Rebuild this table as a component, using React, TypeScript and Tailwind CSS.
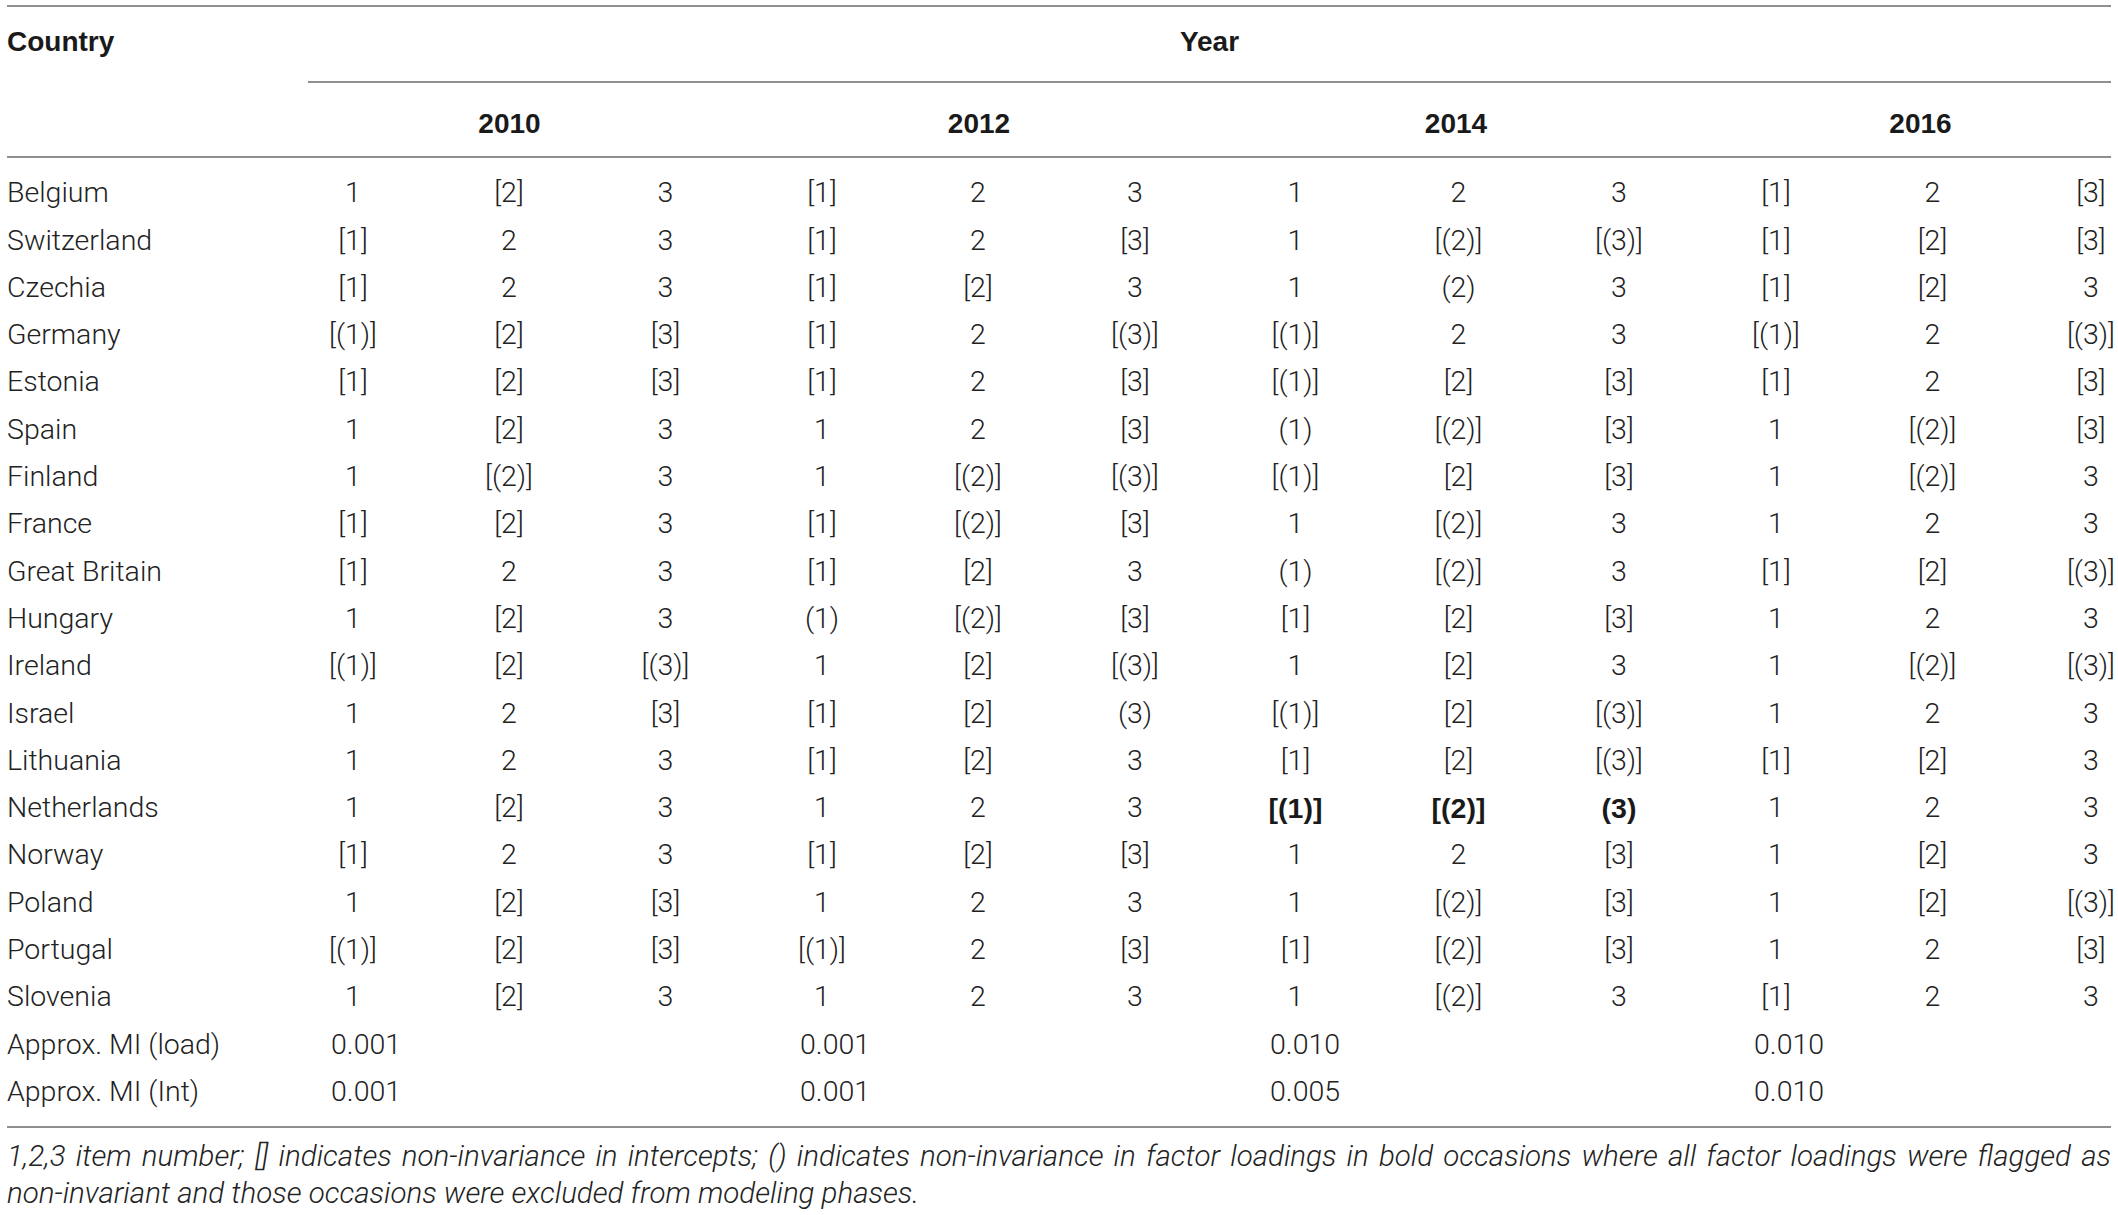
import React from "react";

const rows: [string, string[]][] = [
  ["Belgium", ["1", "[2]", "3", "[1]", "2", "3", "1", "2", "3", "[1]", "2", "[3]"]],
  ["Switzerland", ["[1]", "2", "3", "[1]", "2", "[3]", "1", "[(2)]", "[(3)]", "[1]", "[2]", "[3]"]],
  ["Czechia", ["[1]", "2", "3", "[1]", "[2]", "3", "1", "(2)", "3", "[1]", "[2]", "3"]],
  ["Germany", ["[(1)]", "[2]", "[3]", "[1]", "2", "[(3)]", "[(1)]", "2", "3", "[(1)]", "2", "[(3)]"]],
  ["Estonia", ["[1]", "[2]", "[3]", "[1]", "2", "[3]", "[(1)]", "[2]", "[3]", "[1]", "2", "[3]"]],
  ["Spain", ["1", "[2]", "3", "1", "2", "[3]", "(1)", "[(2)]", "[3]", "1", "[(2)]", "[3]"]],
  ["Finland", ["1", "[(2)]", "3", "1", "[(2)]", "[(3)]", "[(1)]", "[2]", "[3]", "1", "[(2)]", "3"]],
  ["France", ["[1]", "[2]", "3", "[1]", "[(2)]", "[3]", "1", "[(2)]", "3", "1", "2", "3"]],
  ["Great Britain", ["[1]", "2", "3", "[1]", "[2]", "3", "(1)", "[(2)]", "3", "[1]", "[2]", "[(3)]"]],
  ["Hungary", ["1", "[2]", "3", "(1)", "[(2)]", "[3]", "[1]", "[2]", "[3]", "1", "2", "3"]],
  ["Ireland", ["[(1)]", "[2]", "[(3)]", "1", "[2]", "[(3)]", "1", "[2]", "3", "1", "[(2)]", "[(3)]"]],
  ["Israel", ["1", "2", "[3]", "[1]", "[2]", "(3)", "[(1)]", "[2]", "[(3)]", "1", "2", "3"]],
  ["Lithuania", ["1", "2", "3", "[1]", "[2]", "3", "[1]", "[2]", "[(3)]", "[1]", "[2]", "3"]],
  ["Netherlands", ["1", "[2]", "3", "1", "2", "3", "[(1)]", "[(2)]", "(3)", "1", "2", "3"]],
  ["Norway", ["[1]", "2", "3", "[1]", "[2]", "[3]", "1", "2", "[3]", "1", "[2]", "3"]],
  ["Poland", ["1", "[2]", "[3]", "1", "2", "3", "1", "[(2)]", "[3]", "1", "[2]", "[(3)]"]],
  ["Portugal", ["[(1)]", "[2]", "[3]", "[(1)]", "2", "[3]", "[1]", "[(2)]", "[3]", "1", "2", "[3]"]],
  ["Slovenia", ["1", "[2]", "3", "1", "2", "3", "1", "[(2)]", "3", "[1]", "2", "3"]],
];

const mi: [string, string[]][] = [
  ["Approx. MI (load)", ["0.001", "0.001", "0.010", "0.010"]],
  ["Approx. MI (Int)", ["0.001", "0.001", "0.005", "0.010"]],
];

const gridCols =
  "grid grid-cols-[268px_156px_156px_157px_156px_156px_158px_163px_163px_158px_156px_157px_1fr]";

const boldFont = "font-['Liberation_Sans',Arial,sans-serif] font-bold text-[#1a1a1a]";

export default function App() {
  return (
    <div className="w-[2118px] min-h-[1215px] bg-white px-[7px] pt-[5px] font-['Roboto',sans-serif] font-light text-[#222] text-[28.5px]">
      <div className="h-[2px] bg-[#8f8f8f]" />
      {/* Header */}
      <div className={gridCols}>
        <div className={`h-[76px] pb-[6px] flex items-center ${boldFont} text-[28px]`}>Country</div>
        <div
          className={`col-span-12 ml-[33px] h-[76px] pb-[4px] flex items-center justify-center border-b-2 border-[#8f8f8f] ${boldFont} text-[28px]`}
        >
          Year
        </div>
        <div className="h-[73px]" />
        {["2010", "2012", "2014"].map((y) => (
          <div key={y} className={`col-span-3 h-[73px] pt-[8px] flex items-center justify-center ${boldFont} text-[28px]`}>
            {y}
          </div>
        ))}
        <div className={`col-span-3 h-[73px] pt-[8px] pl-[32px] flex items-center justify-center ${boldFont} text-[28px]`}>
          2016
        </div>
      </div>
      <div className="h-[2px] bg-[#8f8f8f]" />
      {/* Body */}
      <div className={`${gridCols} pt-[12px] pb-[10px]`}>
        {rows.map(([country, vals]) => (
          <React.Fragment key={country}>
            <div className="h-[47.3px] flex items-center whitespace-nowrap">{country}</div>
            {vals.map((v, i) => {
              const bold = country === "Netherlands" && i >= 6 && i <= 8;
              const last = i === 11;
              return (
                <div
                  key={i}
                  className={`h-[47.3px] flex items-center justify-center ${last ? "pl-[56px]" : ""} ${
                    bold ? boldFont : ""
                  }`}
                >
                  {v}
                </div>
              );
            })}
          </React.Fragment>
        ))}
        {mi.map(([label, vals]) => (
          <React.Fragment key={label}>
            <div className="h-[47.3px] flex items-center whitespace-nowrap">{label}</div>
            {vals.map((v, i) => (
              <div key={i} className="col-span-3 h-[47.3px] flex items-center pl-[56px]">
                {v}
              </div>
            ))}
          </React.Fragment>
        ))}
      </div>
      <div className="h-[2px] bg-[#8f8f8f]" />
      {/* Footnote */}
      <div className="pt-[10px] italic text-[29.5px] leading-[37px]">
        <div className="text-justify [text-align-last:justify] whitespace-nowrap">
          1,2,3 item number; [] indicates non-invariance in intercepts; () indicates non-invariance in factor loadings in bold occasions where all factor loadings were flagged as
        </div>
        <div>non-invariant and those occasions were excluded from modeling phases.</div>
      </div>
    </div>
  );
}
